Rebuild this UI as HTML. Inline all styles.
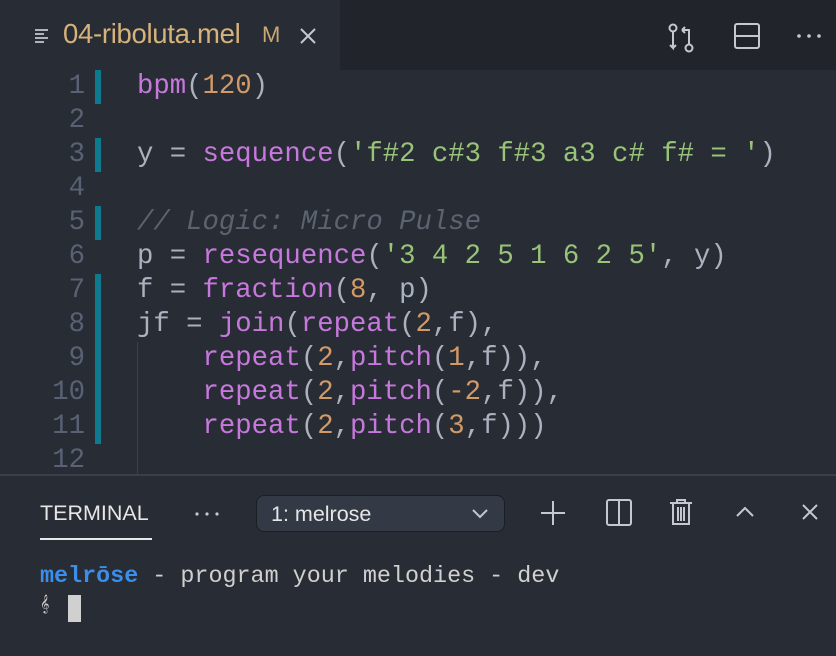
<!DOCTYPE html>
<html><head><style>
body{margin:0;width:836px;height:654px;background:#282c34;overflow:hidden;position:relative;font-family:"Liberation Sans",sans-serif}
.tabbar{position:absolute;left:0;top:0;width:836px;height:70px;background:#21252b}
.tab{position:absolute;left:0;top:0;width:340px;height:70px;background:#282c34}
.tab .t{position:absolute;left:63px;top:18px;font-size:27.5px;color:#d7b27a;letter-spacing:-0.3px}
.tab .m{position:absolute;left:262px;top:22px;font-size:22px;color:#c8a874}
.code{position:absolute;left:0;top:70px;font-family:"Liberation Mono",monospace;font-size:27.3px;}
.ln{position:absolute;left:0;width:85px;text-align:right;color:#596274;height:34px;line-height:34px}
.cl{position:absolute;left:137px;white-space:pre;color:#abb2bf;height:34px;line-height:34px}
.bar{position:absolute;left:95px;width:6px;background:#0e7a8f}
.p{color:#c678dd}.o{color:#d19a66}.g{color:#98c379}.c{color:#5c6370;font-style:italic}
.term{position:absolute;left:0;top:474px;width:836px;height:180px;border-top:2px solid #3a3f4a;background:#282c34}
.ic{position:absolute;stroke:#c5c8ce;fill:none;stroke-width:2}
</style></head><body>
<div class="tabbar">
 <div class="tab">
  <svg class="ic" style="left:34px;top:28px" width="16" height="16"><path d="M1 2h13M1 6h9M1 10h13M1 14h9" stroke-width="1.8"/></svg>
  <div class="t">04-riboluta.mel</div><div class="m">M</div>
  <svg class="ic" style="left:299px;top:27px" width="18" height="18"><path d="M2 2L16 16M16 2L2 16"/></svg>
 </div>
 <svg class="ic" style="left:666px;top:22px" width="32" height="32" stroke-width="1.8"><circle cx="7" cy="6" r="3.5"/><circle cx="23" cy="26" r="3.5"/><path d="M7 10v16l-3-3M7 26l3-3M23 22V8h-7M16 8l3-3M16 8l3 3"/></svg>
 <svg class="ic" style="left:733px;top:22px" width="28" height="28" stroke-width="1.8"><rect x="2" y="2" width="24" height="24" rx="2"/><path d="M2 14h24"/></svg>
 <svg style="position:absolute;left:796px;top:33px" width="26" height="6"><circle cx="3" cy="3" r="1.8" fill="#c5c8ce"/><circle cx="13" cy="3" r="1.8" fill="#c5c8ce"/><circle cx="23" cy="3" r="1.8" fill="#c5c8ce"/></svg>
</div>
<div class="code">
 <div class="bar" style="top:0;height:34px"></div>
 <div class="bar" style="top:68px;height:34px"></div>
 <div class="bar" style="top:136px;height:34px"></div>
 <div class="bar" style="top:204px;height:170px"></div>
 <div style="position:absolute;left:137px;top:272px;width:1px;height:132px;background:#3b404a"></div>
 <div class="ln" style="top:0">1</div><div class="cl" style="top:0"><span class="p">bpm</span>(<span class="o">120</span>)</div>
 <div class="ln" style="top:34px">2</div>
 <div class="ln" style="top:68px">3</div><div class="cl" style="top:68px">y = <span class="p">sequence</span>(<span class="g">'f#2 c#3 f#3 a3 c# f# = '</span>)</div>
 <div class="ln" style="top:102px">4</div>
 <div class="ln" style="top:136px">5</div><div class="cl c" style="top:136px">// Logic: Micro Pulse</div>
 <div class="ln" style="top:170px">6</div><div class="cl" style="top:170px">p = <span class="p">resequence</span>(<span class="g">'3 4 2 5 1 6 2 5'</span>, y)</div>
 <div class="ln" style="top:204px">7</div><div class="cl" style="top:204px">f = <span class="p">fraction</span>(<span class="o">8</span>, p)</div>
 <div class="ln" style="top:238px">8</div><div class="cl" style="top:238px">jf = <span class="p">join</span>(<span class="p">repeat</span>(<span class="o">2</span>,f),</div>
 <div class="ln" style="top:272px">9</div><div class="cl" style="top:272px">    <span class="p">repeat</span>(<span class="o">2</span>,<span class="p">pitch</span>(<span class="o">1</span>,f)),</div>
 <div class="ln" style="top:306px">10</div><div class="cl" style="top:306px">    <span class="p">repeat</span>(<span class="o">2</span>,<span class="p">pitch</span>(<span class="o">-2</span>,f)),</div>
 <div class="ln" style="top:340px">11</div><div class="cl" style="top:340px">    <span class="p">repeat</span>(<span class="o">2</span>,<span class="p">pitch</span>(<span class="o">3</span>,f)))</div>
 <div class="ln" style="top:374px">12</div>
</div>
<div class="term">
 <div style="position:absolute;left:40px;top:25px;font-size:21.5px;color:#e6e6e6">TERMINAL</div>
 <div style="position:absolute;left:40px;top:62px;width:112px;height:2px;background:#e6e6e6"></div>
 <svg style="position:absolute;left:194px;top:35px" width="26" height="6"><circle cx="3" cy="3" r="1.6" fill="#c5c8ce"/><circle cx="13" cy="3" r="1.6" fill="#c5c8ce"/><circle cx="23" cy="3" r="1.6" fill="#c5c8ce"/></svg>
 <div style="position:absolute;left:256px;top:19px;width:247px;height:35px;background:#343a45;border:1px solid #1b1e23;border-radius:8px">
  <div style="position:absolute;left:14px;top:6px;font-size:21.5px;color:#e6e6e6">1: melrose</div>
  <svg class="ic" style="left:214px;top:12px" width="18" height="12" stroke-width="1.8"><path d="M2 2l7 7 7-7"/></svg>
 </div>
 <svg class="ic" style="left:540px;top:24px" width="26" height="26" stroke-width="1.8"><path d="M13 1v24M1 13h24"/></svg>
 <svg class="ic" style="left:606px;top:23px" width="26" height="28" stroke-width="1.8"><rect x="1" y="1" width="24" height="25" rx="2"/><path d="M13 1v25"/></svg>
 <svg class="ic" style="left:669px;top:22px" width="24" height="28" stroke-width="1.8"><path d="M1 5h22M8 5V2h8v3M4 5v21h16V5M9 9v14M12 9v14M15 9v14"/></svg>
 <svg class="ic" style="left:735px;top:30px" width="20" height="12" stroke-width="1.8"><path d="M2 10l8-8 8 8"/></svg>
 <svg class="ic" style="left:801px;top:27px" width="18" height="18" stroke-width="1.8"><path d="M2 2L16 16M16 2L2 16"/></svg>
 <div style="position:absolute;left:40px;top:88px;font-family:'Liberation Mono',monospace;font-size:23.4px;color:#d0d0d0;white-space:pre"><b style="color:#3b8eea">melrōse</b> - program your melodies - dev</div>
 <div style="position:absolute;left:40px;top:120px;font-size:16px;color:#d0d0d0">𝄞</div>
 <div style="position:absolute;left:68px;top:119px;width:13px;height:27px;background:#d0d0d0"></div>
</div>
</body></html>
